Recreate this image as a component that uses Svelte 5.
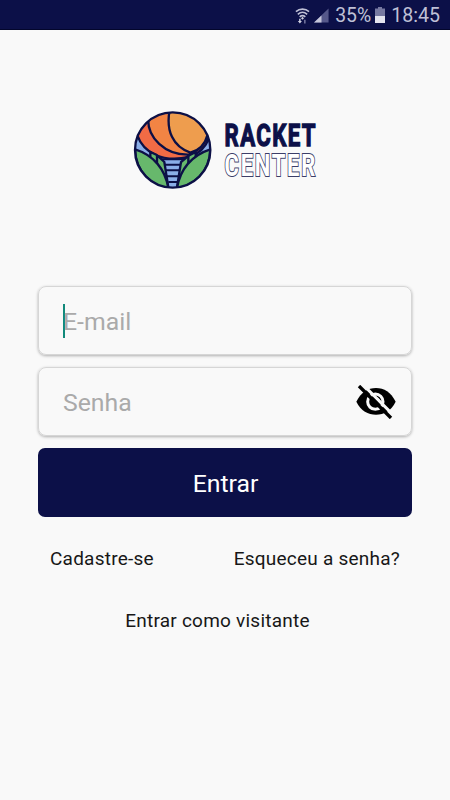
<script lang="ts">
  let email = $state('');
  let password = $state('');
  let showPassword = $state(false);
</script>

<div class="screen">
  <header class="status-bar">
    <svg class="wifi" viewBox="0 0 16 18" aria-hidden="true">
      <g fill="none" stroke="#bfc0d6" stroke-width="1.7">
        <path d="M1 4.4C5 .8 11 .8 15 4.4" />
        <path d="M3 7.2C6 4.6 10 4.6 13 7.2" />
        <path d="M5 9.9C7 8.2 9 8.2 11 9.9" />
      </g>
      <path d="M8 9.8l1.6 1.6L8 13l-1.6-1.6zM4.4 12h1.6v2.2h1.4l-2.2 2.8L3 14.2h1.4z" fill="#d0d1e0" />
      <path d="M10.5 17v-4" stroke="#7779a0" stroke-width="1.6" />
    </svg>
    <svg class="signal" viewBox="0 0 16 16" aria-hidden="true">
      <path d="M15.5 0v15H0z" fill="#55588a" />
      <path d="M8 7.5V15H0z" fill="#c5c6da" />
    </svg>
    <span class="percent">35%</span>
    <svg class="battery" viewBox="0 0 10 16" aria-hidden="true">
      <path d="M3 0h4v1.5h3V9H0V1.5h3z" fill="#7779a0" />
      <path d="M0 9h10v7H0z" fill="#e4e4ee" />
    </svg>
    <span class="clock">18:45</span>
  </header>

  <main>
    <div class="brand">
      <svg class="emblem" viewBox="24 30 240 240" aria-hidden="true">
        <defs>
          <clipPath id="disc"><circle cx="143" cy="150" r="112" /></clipPath>
        </defs>
        <g clip-path="url(#disc)" stroke="#0c1046" stroke-width="7">
          <path d="M20 20h250v250H20z" fill="#8aaee8" stroke="none" />
          <path d="M104 178h78M112 194h62M118 211h50M124 229h38M130 246h28" stroke-width="6" />
          <path d="M36 104C56 160 112 188 192 171C220 162 242 142 252 114L270 10H10z" fill="#f26b45" />
          <path d="M70 50C64 114 122 166 192 164L254 110 270 10H70z" fill="#f28444" />
          <path d="M134 30C122 92 144 140 196 158C222 152 240 134 248 104L275 10H134z" fill="#ee9d4e" />
          <path d="M76 156l18 8 24 22 12 76-54-60z" fill="#67b86c" />
          <path d="M96 166v42" />
          <path d="M212 156l-20 10-24 20-12 76 56-60z" fill="#67b86c" />
          <path d="M190 166v42" />
          <path d="M30 148C85 165 122 208 130 266C80 258 32 215 30 148z" fill="#67b86c" />
          <path d="M256 148C201 165 164 208 156 266C206 258 254 215 256 148z" fill="#67b86c" />
        </g>
        <circle cx="143" cy="150" r="113" fill="none" stroke="#0c1046" stroke-width="7" />
      </svg>
      <svg class="wordmark" viewBox="0 0 96 80" role="img" aria-label="Racket Center">
        <text class="solid" x="2.5" y="36" textLength="92.5" lengthAdjust="spacingAndGlyphs">RACKET</text>
        <text class="outline" x="2.5" y="65.5" textLength="92.5" lengthAdjust="spacingAndGlyphs">CENTER</text>
      </svg>
    </div>

    <form onsubmit={(e) => e.preventDefault()}>
      <label class="field">
        <span class="caret"></span>
        <input type="text" placeholder="E-mail" bind:value={email} />
      </label>
      <div class="field">
        <input
          type={showPassword ? 'text' : 'password'}
          placeholder="Senha"
          aria-label="Senha"
          bind:value={password}
        />
        <button
          class="toggle"
          type="button"
          aria-label="Mostrar senha"
          onclick={() => (showPassword = !showPassword)}
        >
          <svg viewBox="0 0 120 102" aria-hidden="true">
            <path d="M1 50C15 22 36 9 60 9s45 13 59 41c-14 28-35 39-59 39S15 78 1 50z" />
            <circle cx="58" cy="50" r="23" fill="none" stroke="#f9f9f9" stroke-width="9" />
            <path d="M58 39a12 12 0 0 1 12 12" fill="none" stroke="#f9f9f9" stroke-width="5" />
            <path d="M18 -4l98 98" stroke="#f9f9f9" stroke-width="9" />
            <path d="M9 3l96 96" stroke="#000" stroke-width="10" />
          </svg>
        </button>
      </div>
      <button class="submit" type="submit">Entrar</button>
    </form>

    <nav>
      <div class="row">
        <button class="link" type="button">Cadastre-se</button>
        <button class="link" type="button">Esqueceu a senha?</button>
      </div>
      <button class="link guest" type="button">Entrar como visitante</button>
    </nav>
  </main>
</div>

<style>
  :global(body) {
    background: #f9f9f9;
  }
  .screen {
    min-height: 800px;
    font-family: Roboto, 'Liberation Sans', sans-serif;
    background: #f9f9f9;
    color: #171717;
  }
  .status-bar {
    box-sizing: border-box;
    display: flex;
    align-items: center;
    justify-content: flex-end;
    height: 30px;
    padding: 2px 10px 0 0;
    border-bottom: 1px solid #03062c;
    background: #0c1048;
    color: #bfc0d6;
    font-size: 19.6px;
    line-height: 28px;
  }
  .wifi {
    width: 15px;
    height: 18px;
    margin-right: 4px;
  }
  .signal {
    width: 15px;
    height: 16px;
    margin-right: 6px;
  }
  .percent {
    font-size: 19.4px;
  }
  .battery {
    width: 10px;
    height: 16px;
    margin: 0 6px 2px 4px;
  }
  main {
    padding: 80px 38px 0;
  }
  .brand {
    display: flex;
    gap: 9px;
    padding-left: 95px;
  }
  .emblem {
    width: 80px;
    height: 80px;
  }
  .wordmark {
    width: 96px;
    height: 80px;
    overflow: visible;
    font-size: 31.5px;
    font-weight: 700;
  }
  .solid {
    fill: #0c1048;
    stroke: #0c1048;
    stroke-width: 1.3px;
    letter-spacing: 2px;
  }
  .outline {
    fill: #fff;
    stroke: #3c3e68;
    stroke-width: 2px;
    paint-order: stroke;
    letter-spacing: 2.5px;
  }
  form {
    display: flex;
    flex-direction: column;
    gap: 12px;
    margin-top: 96px;
  }
  .field {
    box-sizing: border-box;
    display: flex;
    align-items: center;
    height: 69px;
    padding: 0 15px 0 24px;
    border: 1px solid #d6d6d6;
    border-radius: 8px;
    box-shadow: 0 1px 3px rgba(0, 0, 0, 0.3);
  }
  .caret {
    width: 2px;
    height: 34px;
    margin-right: -2px;
    background: #128a7b;
  }
  input {
    flex: 1;
    min-width: 0;
    padding: 1px 0 0;
    border: 0;
    outline: 0;
    background: none;
    color: #171717;
    font: inherit;
    font-size: 24.8px;
  }
  input::placeholder {
    color: #aaa;
    opacity: 1;
  }
  button {
    padding: 0;
    border: 0;
    background: none;
    color: inherit;
    font: inherit;
  }
  .toggle {
    display: flex;
  }
  .toggle svg {
    width: 40px;
    height: 34px;
  }
  .submit {
    height: 69px;
    padding: 2px 0 0 1px;
    border-radius: 7px;
    background: #0c1048;
    color: #fff;
    font-size: 24.8px;
  }
  nav {
    display: flex;
    flex-direction: column;
    align-items: center;
    gap: 38px;
    padding: 30px 12px 0;
  }
  .row {
    display: flex;
    justify-content: space-between;
    width: 100%;
  }
  .link {
    font-size: 19px;
    line-height: 24px;
    letter-spacing: 0.23px;
  }
  .guest {
    margin-right: 15px;
  }
</style>
